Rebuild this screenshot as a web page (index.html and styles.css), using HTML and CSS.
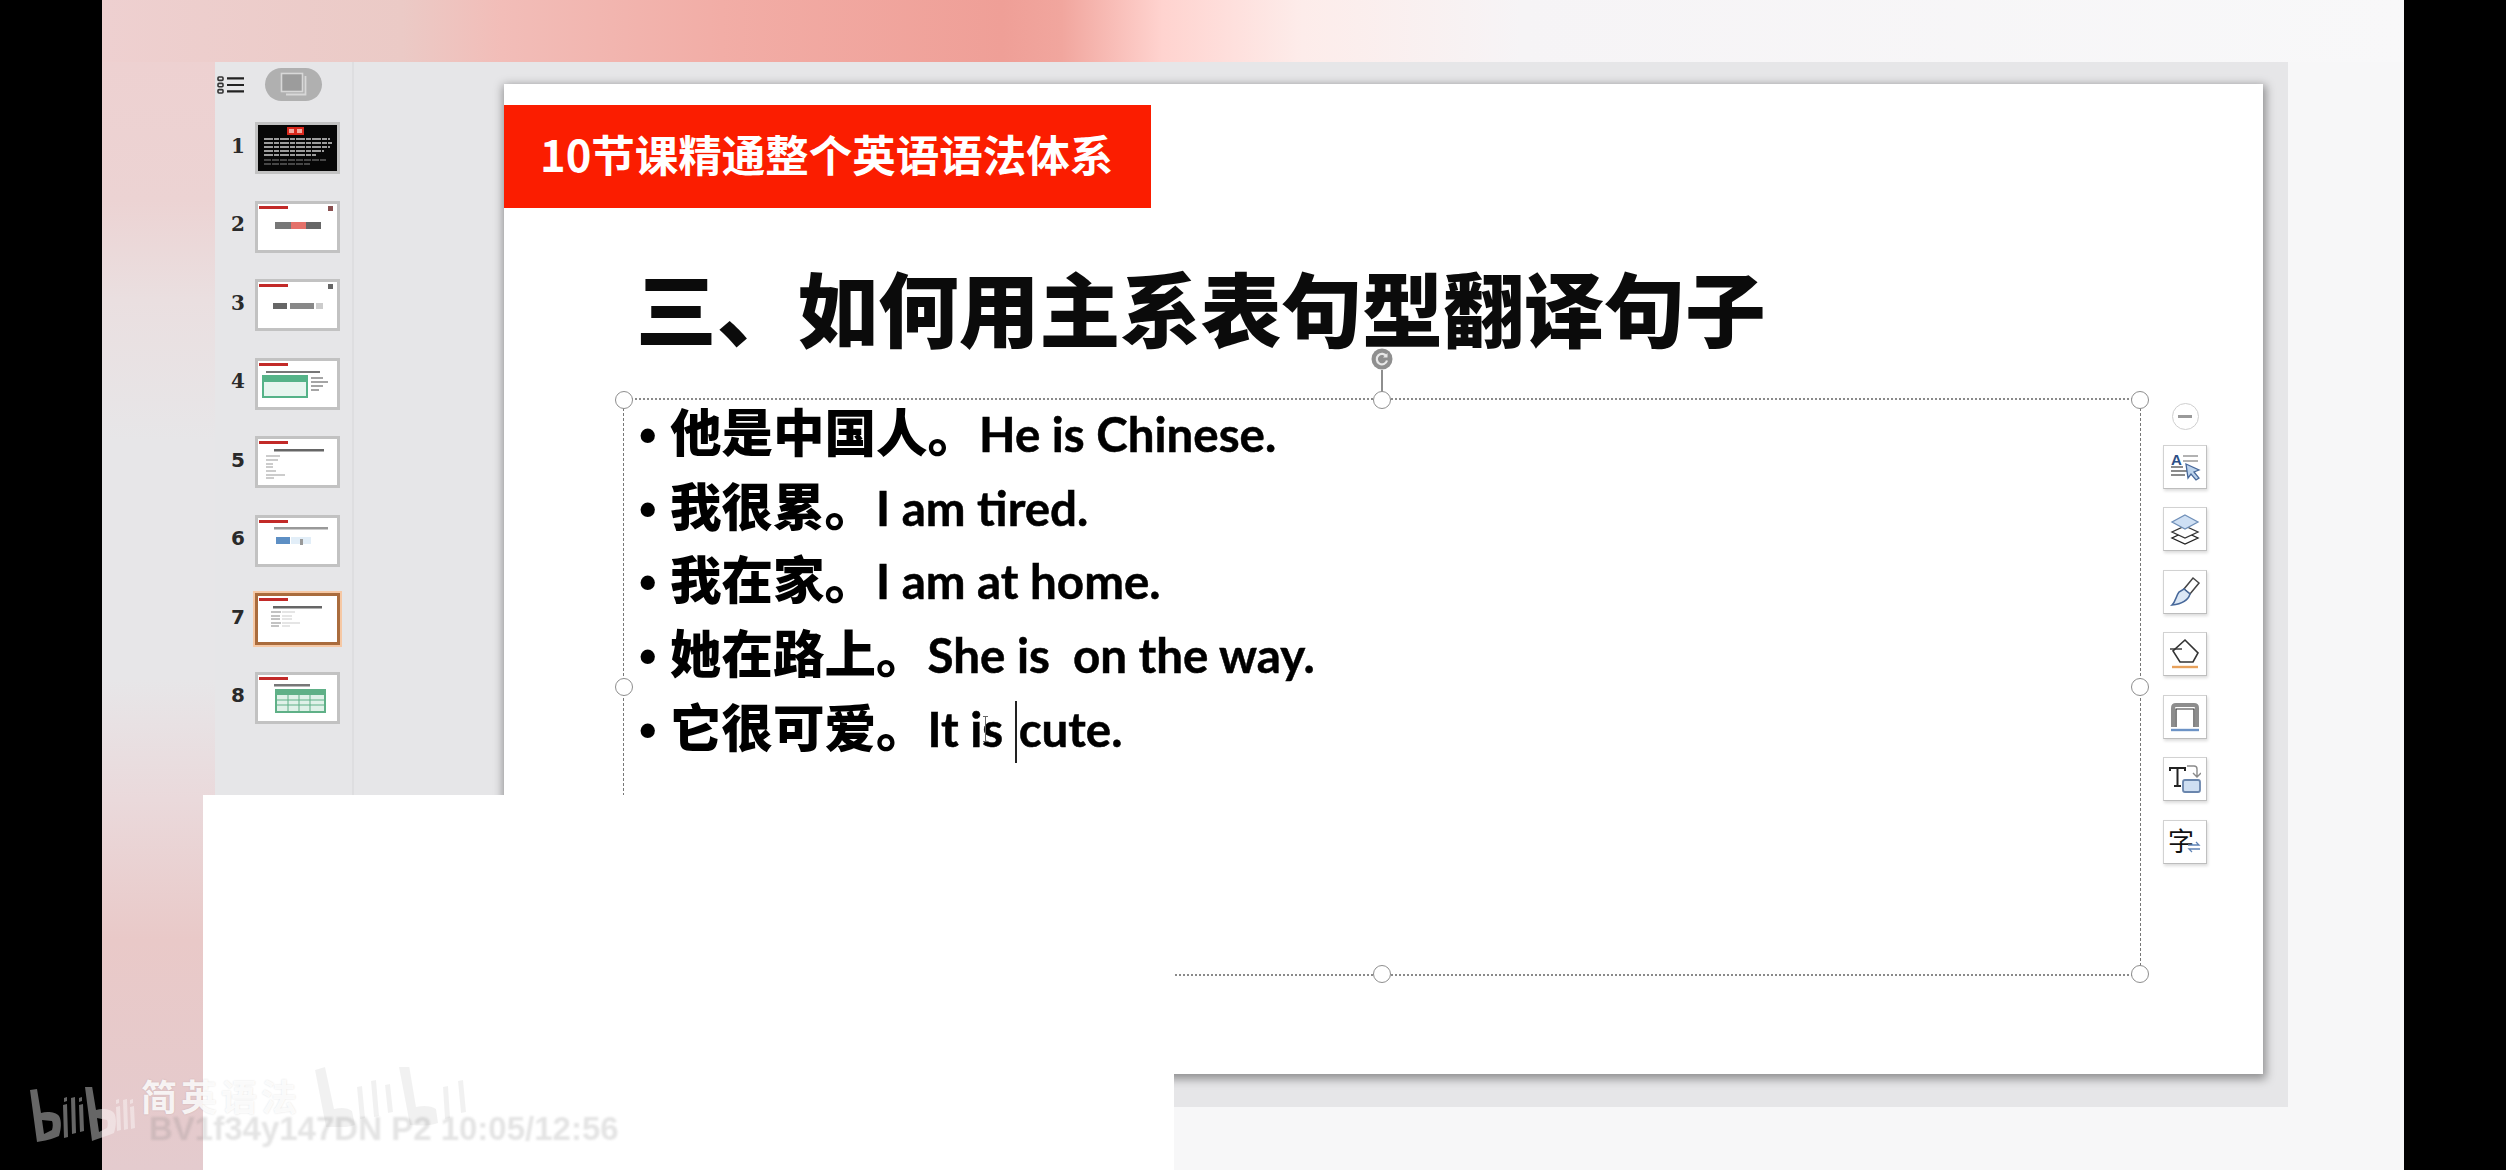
FILE: index.html
```html
<!DOCTYPE html>
<html lang="zh-CN">
<head>
<meta charset="utf-8">
<title>10节课精通整个英语语法体系</title>
<link rel="stylesheet" href="styles.css">
</head>
<body>
<div class="screen">
  <div class="stage">
    <div class="window">
      <aside class="sidebar">
        <div class="side-head">
          <svg class="list-icon" width="28" height="18" viewBox="0 0 28 18"><g fill="none" stroke="#333" stroke-width="1.6"><rect x="1" y="1" width="5" height="3.4" rx="1"/><rect x="1" y="7.4" width="5" height="3.4" rx="1"/><rect x="1" y="13.6" width="5" height="3.4" rx="1"/></g><g stroke="#222" stroke-width="2.2"><path d="M10 2.4h17M10 9h17M10 15.4h17"/></g></svg>
          <div class="pill"><svg width="28" height="26" viewBox="0 0 28 26"><rect x="1.5" y="1.5" width="21" height="18" fill="#9c9c9c" stroke="#d8d8d8" stroke-width="1.6"/><path d="M25.500 4v18.500H6" fill="none" stroke="#d8d8d8" stroke-width="1.800"/></svg></div>
        </div>
        <ol class="thumbs">
          <li class="thumb-row"><span class="num serif">1</span><div class="thumb"><svg viewBox="0 0 79 46"><rect width="79" height="46" fill="#070707"/><rect x="29" y="2" width="17" height="8" fill="#d8281c"/><rect x="31" y="4" width="5" height="4" fill="#f3a9a0"/><rect x="39" y="4" width="5" height="4" fill="#f3a9a0"/><path d="M6 14h66M6 18h68M6 22h66M6 26h60M6 30h52" stroke="#cfcfcf" stroke-width="1.300" stroke-dasharray="9 1 5 1"/><path d="M6 35h62M6 39h46" stroke="#888" stroke-width="1" stroke-dasharray="7 1"/></svg></div></li>
          <li class="thumb-row"><span class="num serif">2</span><div class="thumb"><svg viewBox="0 0 79 46"><rect width="79" height="46" fill="#fff"/><rect x="1" y="2" width="29" height="3" fill="#c22a28"/><rect x="70" y="2" width="5" height="5" fill="#8a5050"/><rect x="17" y="18" width="16" height="7" fill="#777"/><rect x="33" y="18" width="15" height="7" fill="#e4716a"/><rect x="48" y="18" width="15" height="7" fill="#666"/></svg></div></li>
          <li class="thumb-row"><span class="num serif">3</span><div class="thumb"><svg viewBox="0 0 79 46"><rect width="79" height="46" fill="#fff"/><rect x="1" y="2" width="29" height="3" fill="#c22a28"/><rect x="70" y="2" width="5" height="5" fill="#666"/><rect x="15" y="21" width="14" height="6" fill="#666"/><rect x="32" y="21" width="24" height="6" fill="#888"/><rect x="58" y="21" width="7" height="6" fill="#ccc"/></svg></div></li>
          <li class="thumb-row"><span class="num serif">4</span><div class="thumb"><svg viewBox="0 0 79 46"><rect width="79" height="46" fill="#fff"/><rect x="1" y="2" width="29" height="3" fill="#c22a28"/><rect x="8" y="10" width="54" height="2" fill="#777"/><rect x="4" y="14" width="46" height="23" fill="#55b388"/><rect x="6" y="21" width="42" height="14" fill="#e6f5ee"/><path d="M53 17h12M53 21h17M53 25h12M53 29h8" stroke="#888" stroke-width="1.300"/></svg></div></li>
          <li class="thumb-row"><span class="num">5</span><div class="thumb"><svg viewBox="0 0 79 46"><rect width="79" height="46" fill="#fff"/><rect x="1" y="2" width="29" height="3" fill="#c22a28"/><rect x="16" y="10" width="50" height="2.500" fill="#666"/><path d="M8 17h14M8 21h12M8 25h7M8 28h7M8 32h10M8 36h19M8 39h8" stroke="#999" stroke-width="1.200"/></svg></div></li>
          <li class="thumb-row"><span class="num">6</span><div class="thumb"><svg viewBox="0 0 79 46"><rect width="79" height="46" fill="#fff"/><rect x="1" y="2" width="29" height="3" fill="#c22a28"/><rect x="16" y="9" width="54" height="2.500" fill="#999"/><rect x="18" y="19" width="14" height="7" fill="#5d8fc4"/><rect x="33" y="19" width="20" height="7" fill="#e2eef8"/><rect x="42" y="21" width="3" height="6" fill="#999"/></svg></div></li>
          <li class="thumb-row"><span class="num">7</span><div class="thumb active"><svg viewBox="0 0 79 46"><rect width="79" height="46" fill="#fff"/><rect x="1" y="2" width="29" height="3" fill="#c22a28"/><rect x="15" y="10" width="49" height="2.500" fill="#666"/><path d="M13 16h10M13 20h9M13 23h9M13 27h10M13 30h8" stroke="#888" stroke-width="1.200"/><path d="M24 16h13M24 20h10M24 23h10M24 27h18M24 30h8" stroke="#ccc" stroke-width="1.100"/></svg></div></li>
          <li class="thumb-row"><span class="num">8</span><div class="thumb"><svg viewBox="0 0 79 46"><rect width="79" height="46" fill="#fff"/><rect x="1" y="2" width="29" height="3" fill="#c22a28"/><rect x="16" y="9" width="36" height="2.500" fill="#777"/><rect x="17" y="14" width="51" height="24" fill="#5fb087"/><rect x="19" y="20" width="47" height="16" fill="#dff1e8"/><path d="M30 20v16M41 20v16M52 20v16M19 25h47M19 30h47" stroke="#5fb087" stroke-width="1"/></svg></div></li>
        </ol>
      </aside>
      <main class="canvas">
        <section class="slide">
          <div class="banner">10节课精通整个英语语法体系</div>
          <h1 class="title">三、如何用主系表句型翻译句子</h1>
          <div class="editor">
            <div class="textbox">
              <span class="rotate"><svg width="22" height="22" viewBox="0 0 22 22"><circle cx="11" cy="11" r="10.500" fill="#8f8f8f"/><path d="M15.500 8.500a5.200 5.200 0 1 0 .5 4" fill="none" stroke="#e8e8e8" stroke-width="2.200"/><path d="M16.500 5v4.500h-4.500z" fill="#e8e8e8"/></svg></span>
              <span class="handle tl"></span><span class="handle tc"></span><span class="handle tr"></span>
              <span class="handle ml"></span><span class="handle mr"></span>
              <span class="handle bl"></span><span class="handle bc"></span><span class="handle br"></span>
              <ul class="sentences">
                <li><b class="bullet">•</b><span class="cn">他是中国人。</span><span class="en">He is Chinese.</span></li>
                <li><b class="bullet">•</b><span class="cn">我很累。</span><span class="en">I am tired.</span></li>
                <li><b class="bullet">•</b><span class="cn">我在家。</span><span class="en">I am at home.</span></li>
                <li><b class="bullet">•</b><span class="cn">她在路上。</span><span class="en">She is&nbsp; on the way.</span></li>
                <li><b class="bullet">•</b><span class="cn">它很可爱。</span><span class="en">It i<span class="ibeam"></span>s <span class="caret"></span>cute.</span></li>
              </ul>
            </div>
            <div class="tools">
              <span class="collapse"><i></i></span>
              <button class="tool"><svg viewBox="0 0 32 32" width="32" height="32"><text x="2" y="14" class="ic-a">A</text><path d="M14 5h15M14 10h15" stroke="#999" stroke-width="1.600"/><path d="M2 16h12M2 20h18M2 24h14" stroke="#666" stroke-width="1.500"/><path d="M17 13l13 6-5 2 5 6-3 2-5-6-3 4z" fill="#bcd3ec" stroke="#47689a" stroke-width="1.300"/></svg></button>
              <button class="tool"><svg viewBox="0 0 32 32" width="32" height="32"><path d="M16 19l13 6-13 6-13-6z" fill="#fff" stroke="#222" stroke-width="1.300"/><path d="M16 13l13 6-13 6-13-6z" fill="#fff" stroke="#333" stroke-width="1.300"/><path d="M16 2l13 7-13 7-13-7z" fill="#cfe0f4" stroke="#6f8fb8" stroke-width="1.300"/></svg></button>
              <button class="tool"><svg viewBox="0 0 32 32" width="32" height="32"><path d="M24 2l6 5-9 11-6-5z" fill="#fff" stroke="#444" stroke-width="1.500"/><path d="M15 13l6 5c-2 7-9 10-18 11 4-4 4-9 7-13z" fill="#dbe7f5" stroke="#47689a" stroke-width="1.500"/></svg></button>
              <button class="tool"><svg viewBox="0 0 32 32" width="32" height="32"><path d="M16 2L4 13l7 11h13l5-9z" fill="#fff" stroke="#333" stroke-width="1.600"/><path d="M1 11h12" stroke="#333" stroke-width="1.400"/><path d="M3 29h26" stroke="#e8a25c" stroke-width="2.400"/></svg></button>
              <button class="tool"><svg viewBox="0 0 32 32" width="32" height="32"><path d="M4 26V7q0-3 3-3h18q3 0 3 3v19" fill="none" stroke="#8d8d8d" stroke-width="4"/><path d="M7 26V8h18v18" fill="none" stroke="#333" stroke-width="1.200"/><path d="M2 29h28" stroke="#6c93c6" stroke-width="2.400"/></svg></button>
              <button class="tool"><svg viewBox="0 0 32 32" width="32" height="32"><path d="M1 8V5h15v3M8.500 5v17M5 23h7" fill="none" stroke="#222" stroke-width="2"/><rect x="14" y="17" width="17" height="12" rx="2" fill="#cfdff2" stroke="#6a86ad" stroke-width="1.800"/><path d="M18 3h7q3 0 3 3v7m-4-3l4 4 4-4" fill="none" stroke="#8a8a8a" stroke-width="1.400"/></svg></button>
              <button class="tool"><span class="zi">字</span><svg class="swap" viewBox="0 0 14 12" width="14" height="12"><path d="M1 4h11L9 1M13 8H2l3 3" fill="none" stroke="#5f83b5" stroke-width="1.300"/></svg></button>
            </div>
          </div>
        </section>
      </main>
    </div>
  </div>

  <div class="cover"></div>

  <div class="watermark">
    <svg class="logo logo-a" viewBox="0 0 106 58" width="106" height="58"><path d="M0 3l7-1 4 24c6-2 15-1 18 3 3 5 2 14 0 20-6 3-15 5-22 6zM12 33l2 14 8-4c1-3 1-7 0-9z" fill-rule="evenodd"/><path d="M33 18l4-1 1 33-4 1zM41 11l4-1 1 36-4 1zM49 18l4-1 1 27-4 1zM34 11l3-1v4l-3 1zM49 11l3-1v4l-3 1z"/><path d="M55 0l7-1 4 24c6-2 15-1 18 3 3 5 2 14 0 20-6 3-15 5-22 8zM67 31l2 14 8-4c1-3 1-6 0-8z" fill-rule="evenodd"/><path d="M86 20l4-1 1 24-4 1zM93 13l4-1 1 30-4 1zM100 20l4-1 1 22-4 1zM86 13l3-1v4l-3 1zM100 13l3-1v4l-3 1z"/></svg>
    <span class="wm-name">简英语法</span>
    <svg class="logo logo-b" viewBox="0 0 156 60" width="156" height="60"><path d="M0 3l10-3 9 42c8-2 14-1 18 2l3 14c-9 3-19 3-29 2zM42 20l5-1 3 32-5 1zM56 14l5-1 3 36-5 1zM70 18l5-1 3 28-5 1zM84 0l10-2 7 42c8-2 16-1 20 2l2 14c-8 3-18 3-28 2zM128 20l5-1 2 32-5 1zM143 14l5-1 3 32-5 1z"/></svg>
    <span class="wm-id">BV1f34y147DN P2 10:05/12:56</span>
  </div>
</div>
</body>
</html>
```
FILE: styles.css
```css
* { box-sizing: border-box; }
html, body { margin: 0; padding: 0; height: 100%; background: #000; overflow: hidden; }

.screen {
  position: relative;
  width: 2506px;
  height: 1170px;
  padding: 0 102px;
  background: #000;
  font-family: "Noto Sans CJK SC", "Liberation Sans", sans-serif;
}

.stage {
  height: 100%;
  padding: 62px 116px 63px 113px;
  background:
    linear-gradient(90deg, #eed0d0 0, #ebcac6 300px, #f2bdb8 400px, #f2ada6 620px, #ef9f97 900px, #f1a69e 960px, #ffd3cf 1060px, #fdecea 1200px, #f6f4f6 1420px, #f8f8f9 2302px) top left / 100% 62px no-repeat,
    linear-gradient(180deg, #eed0d0 0, #ecd3d3 200px, #eadfe0 300px, #e7e6e8 440px, #e7e6e8 680px, #ead9db 800px, #e9c9c8 940px, #e4cbce 1170px) left top / 113px 100% no-repeat,
    #f7f7f8;
}

.window { display: flex; height: 100%; background: #e6e6e8; }

/* thumbnails column */
.sidebar { flex: 0 0 139px; border-right: 2px solid #dedee0; }
.side-head { display: flex; align-items: center; height: 45px; margin-bottom: 15px; padding-left: 2px; gap: 20px; }
.list-icon { display: block; }
.pill {
  display: flex; align-items: center; justify-content: center;
  width: 57px; height: 33px; border-radius: 17px; background: #b0b0b0;
}
.thumbs { list-style: none; margin: 0; padding: 0; display: flex; flex-direction: column; gap: 26.500px; }
.thumb-row { display: flex; align-items: center; height: 52px; }
.num {
  flex: 0 0 40px; padding: 0 0 5px 6px; text-align: center;
  font: 700 20px "DejaVu Sans", sans-serif; color: #2a2a2a;
}
.num.serif { font-family: "DejaVu Serif", serif; }
.thumb { width: 85px; height: 52px; border: 3px solid #c2c2c2; background: #fff; }
.thumb svg { display: block; width: 100%; height: 100%; }
.thumb.active { border-color: #aa6c3d; box-shadow: 0 0 0 2px #f6c8a4; }

/* slide */
.canvas { flex: 1; padding: 22px 25px 33px 150px; }
.slide {
  height: 990px;
  padding-top: 21px;
  background: #fff;
  box-shadow: 1px 3px 9px 2px rgba(0, 0, 0, .38);
}
.banner {
  width: 647px; height: 103px; padding-left: 36px;
  background: #fb1d00; color: #fff;
  font-size: 43.500px; font-weight: 700; line-height: 98px; white-space: nowrap;
}
.title {
  margin: 48px 0 42px 132px;
  height: 100px;
  font-size: 80.700px; font-weight: 900; line-height: 100px; color: #0b0b0b; white-space: nowrap;
}
.editor { display: flex; align-items: flex-start; margin-left: 119px; }

.textbox {
  position: relative;
  flex: 0 0 1518px; height: 578px;
  border-top: 2px dotted #8a8a8a; border-bottom: 2px dotted #8a8a8a;
  border-left: 1px dashed #777; border-right: 1px dashed #777;
}
.handle {
  position: absolute; width: 18px; height: 18px; margin: -9px 0 0 -9px;
  border: 1.500px solid #8e8e8e; border-radius: 50%; background: #fff;
}
.tl { left: 0; top: 0; } .tc { left: 50%; top: 0; } .tr { left: 100%; top: 0; }
.ml { left: 0; top: 50%; } .mr { left: 100%; top: 50%; }
.bl { left: 0; top: 100%; } .bc { left: 50%; top: 100%; } .br { left: 100%; top: 100%; }
.rotate { position: absolute; left: 50%; top: -52px; margin-left: -11px; height: 44px; }
.rotate svg { display: block; }
.rotate::after {
  content: ""; position: absolute; left: 10px; top: 22px; width: 2px; height: 22px; background: #8e8e8e;
}

.sentences { list-style: none; margin: -7px 0 0; padding: 0 0 0 15px; filter: blur(.4px); }
.sentences li { height: 73.700px; line-height: 73.700px; white-space: nowrap; color: #000; }
.bullet { display: inline-block; width: 31px; font: 700 50px "Liberation Sans", sans-serif; }
.cn { font-size: 51.500px; font-weight: 900; }
.en { position: relative; font: 700 47.500px Lato, "Liberation Sans", sans-serif; -webkit-text-stroke: .5px #000; }
.caret {
  display: inline-block; width: 2px; height: 62px; margin-right: 2px;
  vertical-align: -16px; background: #222;
}
.ibeam {
  position: absolute; left: 55px; top: 16px; width: 5px; height: 26px;
  border: solid #666; border-width: 1px 0; background: linear-gradient(#666, #666) center / 1px 100% no-repeat;
}

/* floating tools */
.tools { display: flex; flex-direction: column; align-items: center; gap: 18.500px; margin: 5px 0 0 22px; }
.collapse {
  display: flex; align-items: center; justify-content: center;
  width: 27px; height: 27px; margin-bottom: -4px;
  border: 1.500px solid #cfcfcf; border-radius: 50%; background: #fff;
}
.collapse i { display: block; width: 14px; height: 3px; background: #9a9a9a; }
.tool {
  position: relative;
  display: flex; align-items: center; justify-content: center;
  width: 44px; height: 44px; padding: 0;
  border: 1px solid #d2d2d2; border-right-color: #c0c0c0; border-bottom-color: #bdbdbd;
  background: #fff; box-shadow: 1px 2px 3px rgba(0, 0, 0, .14);
}
.ic-a { font: 700 15px "Liberation Sans", sans-serif; fill: #2d4f86; }
.zi { font-size: 26px; line-height: 1; color: #111; margin-right: 9px; }
.swap { position: absolute; right: 5px; top: 20px; }

/* white patch over the recording */
.cover { position: absolute; left: 203px; top: 795px; width: 971px; height: 375px; background: #fff; }

/* recording watermark */
.watermark { position: absolute; inset: 0; pointer-events: none; }
.logo { position: absolute; display: block; }
.logo-a { left: 30px; top: 1087px; fill: rgba(255, 255, 255, .4); }
.logo-b { left: 315px; top: 1067px; fill: rgba(0, 0, 0, .055); }
.wm-name {
  position: absolute; left: 141px; top: 1080px;
  font-size: 36px; font-weight: 700; line-height: 30px; letter-spacing: 4px;
  color: rgba(255, 255, 255, .85); text-shadow: 0 0 2px rgba(0, 0, 0, .12);
}
.wm-id {
  position: absolute; left: 149px; top: 1113px;
  font: 700 33px/32px "Liberation Sans", sans-serif; white-space: nowrap;
  color: rgba(120, 120, 120, .2); filter: blur(.8px);
}
```
